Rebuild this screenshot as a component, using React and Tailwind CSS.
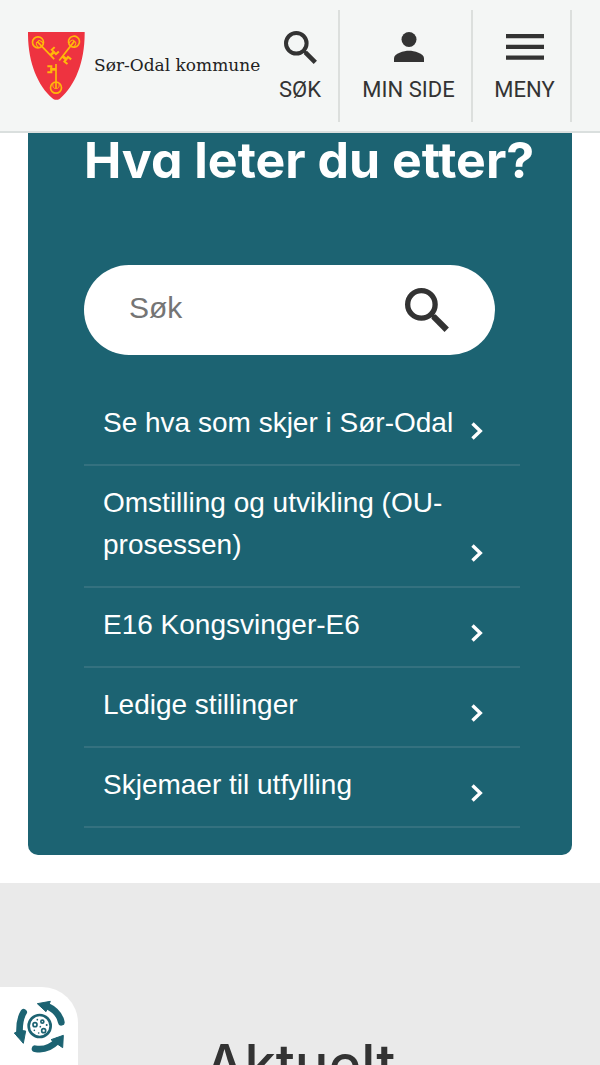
import React from 'react';

const links = [
    'Se hva som skjer i Sør-Odal',
    'Omstilling og utvikling (OU-prosessen)',
    'E16 Kongsvinger-E6',
    'Ledige stillinger',
    'Skjemaer til utfylling',
];

const SearchIcon = ({ className }) => (
    <svg viewBox="0 0 33 33" className={className} fill="none" stroke="currentColor" aria-hidden="true">
        <circle cx="12.3" cy="12.3" r="10.3" strokeWidth="4" />
        <path d="M19.5 19.5l2.5 2.5" strokeWidth="3" />
        <path d="M21.3 21.3L31.3 31.3" strokeWidth="4.6" />
    </svg>
);

const PersonIcon = () => (
    <svg viewBox="4 4 16 16" className="size-[30px]" fill="currentColor" aria-hidden="true">
        <circle cx="12" cy="8" r="4" />
        <path d="M12 14c-2.67 0-8 1.34-8 4v2h16v-2c0-2.66-5.33-4-8-4z" />
    </svg>
);

const MenuIcon = () => (
    <svg viewBox="0 0 38 26" className="h-[26px] w-[38px]" fill="currentColor" aria-hidden="true">
        <path d="M0 0h38v4.2H0zM0 10.8h38v4.2H0zM0 21.5h38v4.2H0z" />
    </svg>
);

const Chevron = () => (
    <svg viewBox="0 0 12 18" className="h-[18px] w-3 shrink-0" fill="none" stroke="currentColor" strokeWidth="3.4" aria-hidden="true">
        <path d="M1.5 1.5L9.3 9L1.5 16.5" />
    </svg>
);

const CrestKey = ({ transform, length }) => (
    <g transform={transform} fill="none" stroke="#ffb80a" strokeWidth="5">
        <circle r="16.5" />
        <path d="M-9 -12C-11 -2 -6 5 0 1C6 5 11 -2 9 -12" strokeWidth="3" />
        <path d={`M0 3V-${length}`} />
        <g transform={`translate(0 ${70 - length})`} strokeWidth="6">
            <path d="M0 -54H-17" strokeWidth="8" />
            <path d="M-26 -45H-14V-63H-26" />
        </g>
    </g>
);

const Crest = () => (
    <svg viewBox="24 36 171 204" className="h-[68px] w-[57px] shrink-0" aria-hidden="true">
        <path d="M24 36H194C195 125 166 195 121 235Q118 239 113 239H105Q101 239 97 235C52 195 23 125 24 36Z" fill="#ee3340" />
        <CrestKey transform="translate(54 67) rotate(136)" length={70} />
        <CrestKey transform="translate(162 65) rotate(218)" length={72} />
        <CrestKey transform="translate(108 203)" length={71} />
    </svg>
);

const CookieIcon = () => (
    <svg viewBox="0 0 234 234" className="size-full" fill="currentColor" stroke="currentColor" aria-hidden="true">
        <g fill="none" strokeLinecap="round" strokeWidth="20">
            <path d="M71 76C61 92 57 110 59 142" />
            <path d="M184 106C180 84 164 67 140 56" />
            <path d="M105 185C128 190 152 182 172 162" />
        </g>
        <g strokeWidth="3" strokeLinejoin="round">
            <path d="M43 138L60 130L77 132L70 169Z" />
            <path d="M112 50L151 43L138 74Z" />
            <path d="M190 145L188 182L153 158Z" />
        </g>
        <circle cx="119" cy="117" r="33" fill="none" strokeWidth="8" />
        <g fill="none" strokeWidth="5">
            <circle cx="105" cy="113" r="6" />
            <circle cx="127" cy="104" r="4.5" />
            <circle cx="131" cy="131" r="6" />
        </g>
        <g stroke="none">
            <circle cx="112" cy="98" r="2.5" />
            <circle cx="121" cy="119" r="2.5" />
            <circle cx="140" cy="114" r="3" />
            <circle cx="103" cy="130" r="2.5" />
            <circle cx="116" cy="138" r="2.5" />
        </g>
    </svg>
);

const NavButton = ({ label, className, children }) => (
    <button type="button" className={`flex shrink-0 flex-col items-center border-r-2 border-[#dcdfdd] pt-4 pr-[18px] ${className}`}>
        <span className="flex h-[42px] items-center justify-center">{children}</span>
        <span className="mt-2 text-[22px] leading-7 whitespace-nowrap">{label}</span>
    </button>
);

const App = () => {
    return (
        <div className="relative h-screen overflow-hidden bg-white font-['Liberation_Sans',Arial,sans-serif] text-[#333]">
            <header className="flex h-[133px] items-start border-b-2 border-[#dadfde] bg-[#f4f6f5] px-7">
                <a href="#" className="flex min-w-0 flex-1 items-center gap-[9px] pt-8">
                    <Crest />
                    <span className="font-['DejaVu_Serif',serif] text-[17px] whitespace-nowrap text-[#222]">Sør-Odal kommune</span>
                </a>
                <nav className="mt-[10px] flex h-28 font-['Roboto',sans-serif]">
                    <NavButton label="SØK" className="w-[76px] pl-4">
                        <SearchIcon className="size-[33px]" />
                    </NavButton>
                    <NavButton label="MIN SIDE" className="w-[133px] pl-6">
                        <PersonIcon />
                    </NavButton>
                    <NavButton label="MENY" className="w-[99px] pl-6">
                        <MenuIcon />
                    </NavButton>
                </nav>
            </header>

            <main>
                <section className="mx-7 rounded-b-[10px] bg-[#1c6372] pr-[52px] pb-[27px] pl-14 text-white">
                    <h1 className="pb-[78px] font-['Inter',sans-serif] text-[50px] leading-[54px] font-bold whitespace-nowrap [font-feature-settings:'cv11']">
                        Hva leter du etter?
                    </h1>
                    <form className="mr-[25px] flex h-[90px] items-center rounded-full bg-white pr-[46px] pl-[45px]">
                        <input
                            type="search"
                            aria-label="Søk"
                            placeholder="Søk"
                            className="min-w-0 flex-1 bg-transparent pb-1 text-[30px] leading-10 text-[#333] outline-none placeholder:text-[#757575]"
                        />
                        <button type="submit" aria-label="Søk" className="text-[#333]">
                            <SearchIcon className="size-11" />
                        </button>
                    </form>
                    <ul className="mt-[31px]">
                        {links.map((link) => (
                            <li key={link} className="border-b-2 border-[#34717f]">
                                <a href="#" className="flex items-end justify-between pt-4 pr-[37px] pb-5 pl-[19px] text-[28px] leading-[42px]">
                                    <span className="min-w-0 flex-1">{link}</span>
                                    <span className="flex h-[26px] items-center">
                                        <Chevron />
                                    </span>
                                </a>
                            </li>
                        ))}
                    </ul>
                </section>

                <section className="mt-7 bg-[#eaeaea] pt-[148px] pb-20">
                    <h2 className="text-center font-['Inter',sans-serif] text-[56px] leading-[68px] font-medium [font-feature-settings:'cv11']">Aktuelt</h2>
                </section>
            </main>

            <button
                type="button"
                aria-label="Informasjonskapsler"
                className="absolute bottom-0 left-0 size-[78px] rounded-tr-[36px] bg-white text-[#1c6372]"
            >
                <CookieIcon />
            </button>
        </div>
    );
};

export default App;
